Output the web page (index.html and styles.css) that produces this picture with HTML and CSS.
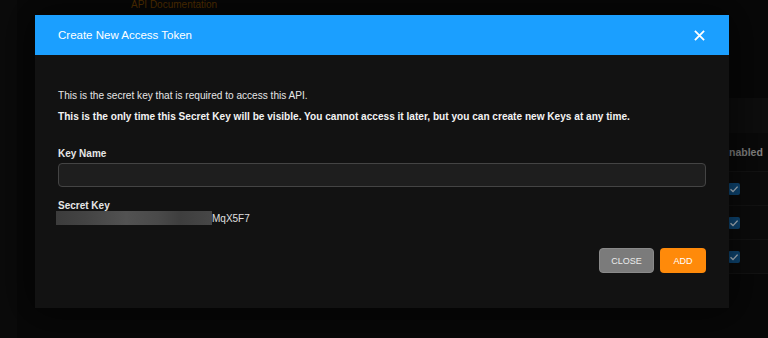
FILE: index.html
```html
<!DOCTYPE html>
<html>
<head>
<meta charset="utf-8">
<link rel="stylesheet" href="styles.css">
</head>
<body>
<div class="page">
  <div class="sidebar"></div>
  <div class="main">
    <div class="topbar"><a class="doc-link">API Documentation</a></div>
    <div class="card">
      <div class="card-head"></div>
      <div class="table">
        <div class="th"><span>Enabled</span></div>
        <div class="tr"><span class="cb"><svg viewBox="0 0 12 12" width="12" height="12"><path d="M2.5 6.2 L5 8.6 L9.6 3.6" fill="none" stroke="#c9d6e0" stroke-width="1.4"/></svg></span></div>
        <div class="tr"><span class="cb"><svg viewBox="0 0 12 12" width="12" height="12"><path d="M2.5 6.2 L5 8.6 L9.6 3.6" fill="none" stroke="#c9d6e0" stroke-width="1.4"/></svg></span></div>
        <div class="tr"><span class="cb"><svg viewBox="0 0 12 12" width="12" height="12"><path d="M2.5 6.2 L5 8.6 L9.6 3.6" fill="none" stroke="#c9d6e0" stroke-width="1.4"/></svg></span></div>
      </div>
    </div>
  </div>
</div>

<div class="modal">
  <div class="modal-header">
    <span class="modal-title">Create New Access Token</span>
    <svg class="close-x" viewBox="0 0 12 12" width="11" height="11"><path d="M1 1 L11 11 M11 1 L1 11" stroke="#ffffff" stroke-width="2" fill="none"/></svg>
  </div>
  <div class="modal-body">
    <p class="info">This is the secret key that is required to access this API.</p>
    <p class="info bold">This is the only time this Secret Key will be visible. You cannot access it later, but you can create new Keys at any time.</p>
    <label class="field-label">Key Name</label>
    <div class="input"></div>
    <div class="field-label secret-label">Secret Key</div>
    <div class="secret"><span class="blur"></span><span class="secret-tail">MqX5F7</span></div>
    <div class="actions">
      <button class="btn btn-close">CLOSE</button>
      <button class="btn btn-add">ADD</button>
    </div>
  </div>
</div>
</body>
</html>
```

FILE: styles.css
```css
* { box-sizing: border-box; }
html, body { margin: 0; padding: 0; }
body {
  width: 768px;
  height: 338px;
  overflow: hidden;
  background: #080808;
  font-family: "Liberation Sans", Arial, sans-serif;
  position: relative;
}
.page {
  display: flex;
  height: 338px;
}
.sidebar {
  width: 17px;
  background: #0b0b0b;
}
.main {
  flex: 1;
  display: flex;
  flex-direction: column;
}
.topbar {
  height: 98px;
  padding: 0 0 0 114px;
}
.doc-link {
  display: block;
  color: #5c3500;
  font-size: 10px;
  line-height: 10px;
  margin-top: 0;
}
.card {
  margin-left: 18px;
  background: #0c0c0c;
}
.card-head {
  height: 35px;
  background: #0e0e0e;
}
.table {
  display: flex;
  flex-direction: column;
  align-items: flex-end;
}
.th, .tr {
  width: 100%;
  display: flex;
  justify-content: flex-end;
  border-bottom: 1px solid #141414;
}
.th {
  height: 39px;
  align-items: center;
  background: #0a0a0a;
}
.th span {
  color: #8a8a8a;
  font-size: 10.5px;
  font-weight: bold;
  width: 46px;
  white-space: nowrap;
}
.tr {
  height: 34px;
  align-items: center;
  padding-right: 28px;
}
.cb {
  width: 12px;
  height: 12px;
  background: #0f4e80;
  border-radius: 2px;
  display: flex;
}

.modal {
  position: absolute;
  left: 35px;
  top: 15px;
  width: 694px;
  height: 293px;
  background: #121212;
  box-shadow: 0 0 40px 10px rgba(0,0,0,0.55);
  display: flex;
  flex-direction: column;
}
.modal-header {
  height: 40px;
  background: #1b9fff;
  display: flex;
  align-items: center;
  justify-content: space-between;
  padding: 0 24px 0 23px;
}
.modal-title {
  color: #ffffff;
  font-size: 11.5px;
}
.close-x { display: block; }
.modal-body {
  padding: 34px 23px 0 23px;
  display: flex;
  flex-direction: column;
}
.info {
  margin: 0;
  color: #e6e6e6;
  font-size: 10.1px;
  line-height: 14px;
}
.info.bold {
  font-weight: bold;
  margin-top: 7px;
  color: #f2f2f2;
}
.field-label {
  display: block;
  color: #e6e6e6;
  font-size: 10px;
  font-weight: bold;
  line-height: 14px;
  margin-top: 23px;
}
.input {
  margin-top: 2px;
  height: 24px;
  border: 1px solid #444;
  border-radius: 4px;
  background: #1e1e1e;
}
.secret-label {
  margin-top: 14px;
  line-height: 10px;
}
.secret {
  display: flex;
  align-items: center;
  height: 14px;
  margin-left: -2px;
}
.blur {
  width: 156px;
  height: 14px;
  background: linear-gradient(90deg, #3c3c3c 0%, #444 20%, #525252 45%, #4a4a4a 65%, #3e3e3e 80%, #474747 100%);
}
.secret-tail {
  color: #e0e0e0;
  font-size: 10px;
}
.actions {
  display: flex;
  justify-content: flex-end;
  gap: 6px;
  margin-top: 23px;
}
.btn {
  height: 25px;
  border: none;
  border-radius: 4px;
  font-family: "Liberation Sans", Arial, sans-serif;
  font-size: 9px;
  padding: 0;
}
.btn-close {
  width: 55px;
  background: #7b7b7b;
  color: #ececec;
  border: 1px solid #8a8a8a;
}
.btn-add {
  width: 46px;
  background: #ff8a0a;
  color: #ffffff;
}
```
